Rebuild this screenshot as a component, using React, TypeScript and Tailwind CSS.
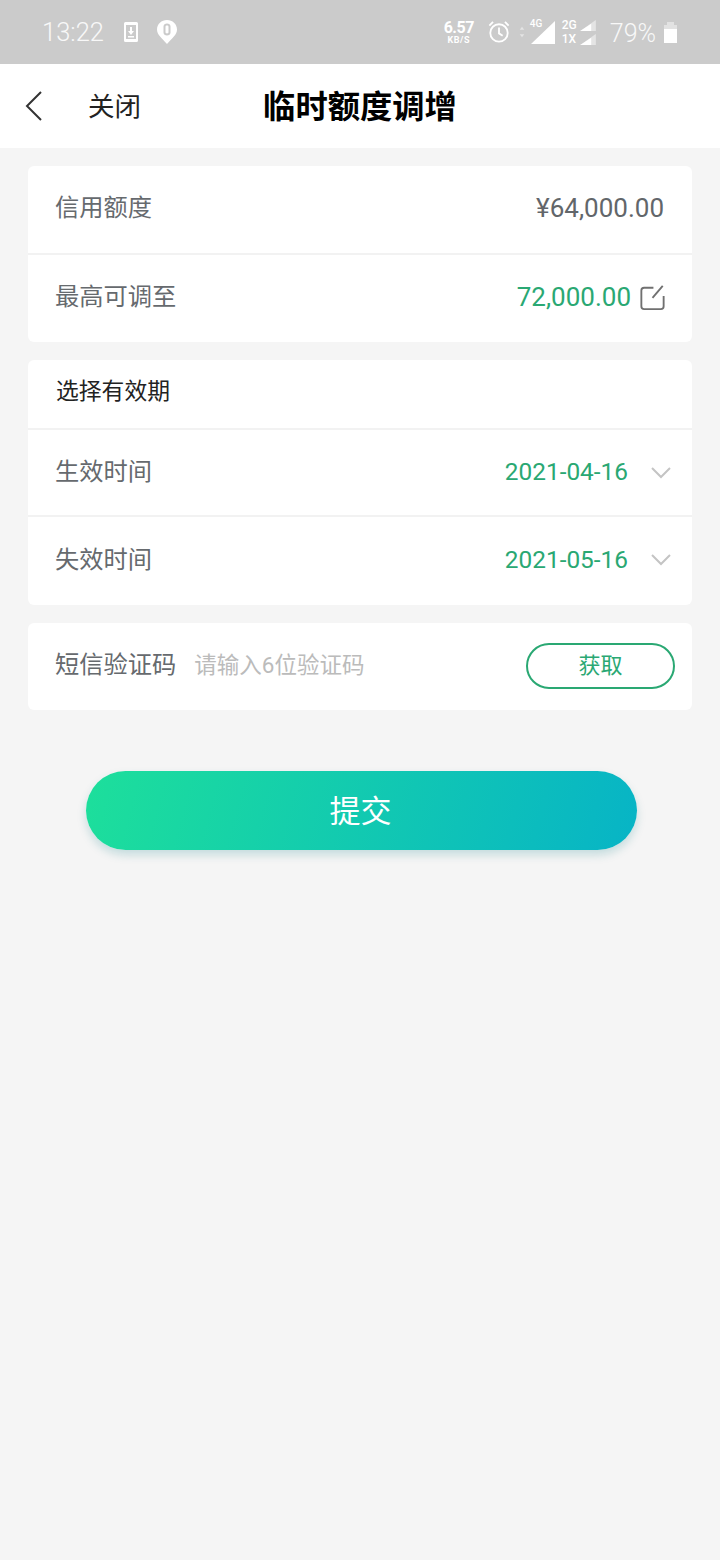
import React from "react";

const cjk = "font-['Roboto','Noto_Sans_CJK_SC',sans-serif]";

function StatusBar() {
  return (
    <div className="flex h-16 items-center justify-between bg-[#cbcbcb] pl-[42px] pr-[43px] text-white">
      <div className="flex items-center">
        <span className="pt-[2px] text-[25.500px] font-light leading-none text-[#f8f8f8]">13:22</span>
        <svg className="ml-[20px]" width="14" height="20" viewBox="0 0 14 20">
          <path fill="#fff" fillRule="evenodd" d="M1.500 0h11A1.500 1.500 0 0 1 14 1.500v17a1.500 1.500 0 0 1-1.500 1.500h-11A1.500 1.500 0 0 1 0 18.500v-17A1.500 1.500 0 0 1 1.500 0zM2 3v14h10V3z" />
          <path fill="#fff" d="M6 5h2v4h2l-3 4-3-4h2zM4 14h6v1.500H4z" />
        </svg>
        <svg className="ml-[19px]" width="20" height="24" viewBox="0 0 20 24">
          <path fill="#fff" fillRule="evenodd" d="M10 0c5.500 0 10 4 10 9.500 0 5.500-5 8.500-10 14.500C5 18 0 15 0 9.500 0 4 4.500 0 10 0zM10 3.500c-2 0-3.500 1.300-3.500 3v6c0 1.700 1.500 3 3.500 3s3.500-1.300 3.500-3v-6c0-1.700-1.500-3-3.500-3zm0 2c1 0 1.500.5 1.500 1.200v5.600c0 .7-.5 1.200-1.500 1.200s-1.500-.5-1.500-1.200V6.700C8.500 6 9 5.500 10 5.500z" />
        </svg>
      </div>
      <div className="flex items-center">
        <div className="flex w-[32px] flex-col items-center font-['Roboto',sans-serif] font-bold leading-none">
          <span className="text-[16px] leading-[15px] tracking-[-0.5px]">6.57</span>
          <span className="text-[9px] leading-[10px] tracking-[0.5px]">KB/S</span>
        </div>
        <svg className="ml-[13px]" width="22" height="24" viewBox="0 0 24 26" fill="none" stroke="#fff" strokeWidth="2">
          <circle cx="12" cy="14" r="9.500" />
          <path d="M12 8v6.500l4 2.500M1.500 6l4-4M22.500 6l-4-4" />
        </svg>
        <svg className="ml-[9px]" width="6" height="12" viewBox="0 0 8 14" fill="#e4e4e4">
          <path d="M4 0l3 4H1zM4 14l-3-4h6z" />
        </svg>
        <div className="relative ml-[6px] h-[24px] w-[24px]">
          <svg className="absolute inset-0" width="24" height="24" viewBox="0 0 24 24">
            <path fill="#fff" d="M24 1v23H0z" />
          </svg>
          <span className="absolute left-[-1px] top-[-2px] font-['Roboto',sans-serif] text-[10px] font-medium leading-[12px]">4G</span>
        </div>
        <div className="ml-[7px] flex flex-col gap-[1px]">
          <div className="flex h-[13px] items-center">
            <span className="w-[18px] font-['Roboto',sans-serif] text-[12px] font-medium leading-none">2G</span>
            <svg width="16" height="11" viewBox="0 0 17 12">
              <path fill="#e4e4e4" d="M17 0v12H0z" />
              <path fill="#fff" d="M12 4v8H0z" />
            </svg>
          </div>
          <div className="flex h-[13px] items-center">
            <span className="w-[18px] font-['Roboto',sans-serif] text-[12px] font-medium leading-none">1X</span>
            <svg width="16" height="11" viewBox="0 0 17 12">
              <path fill="#e4e4e4" d="M17 0v12H0z" />
              <path fill="#fff" d="M12 4v8H0z" />
            </svg>
          </div>
        </div>
        <span className="ml-[14px] pt-[2px] font-['Roboto',sans-serif] text-[25px] font-light leading-none text-[#f8f8f8]">79%</span>
        <div className="ml-[8px] flex flex-col items-center">
          <div className="h-[3px] w-[7px] bg-[#e2e2e2]" />
          <div className="h-[4px] w-[13px] bg-[#e2e2e2]" />
          <div className="h-[14px] w-[13px] bg-white" />
        </div>
      </div>
    </div>
  );
}

function NavBar() {
  return (
    <div className="relative flex h-[84px] items-center justify-center bg-white">
      <div className="absolute left-0 top-0 flex h-full items-center pl-[25px]">
        <svg width="18" height="30" viewBox="0 0 18 30" fill="none" stroke="#333" strokeWidth="2">
          <path d="M16 1L2 15l14 14" />
        </svg>
        <span className="ml-[45px] pt-[2px] text-[26.500px] leading-none text-[#222]">关闭</span>
      </div>
      <span className="pt-[2px] text-[32.300px] font-bold leading-none text-black">临时额度调增</span>
    </div>
  );
}

function Row({ label, className, children }: { label: string; className: string; children: React.ReactNode }) {
  return (
    <div className={`flex items-center justify-between pl-[27px] ${className}`}>
      <span className="text-[24.250px] leading-none text-[#666a6e]">{label}</span>
      {children}
    </div>
  );
}

function DateValue({ value }: { value: string }) {
  return (
    <div className="flex items-center pr-[21px]">
      <span className="text-[24.400px] leading-none text-[#2aa873]">{value}</span>
      <svg className="ml-[23px]" width="20" height="12" viewBox="0 0 20 12" fill="none" stroke="#c4c4c4" strokeWidth="2">
        <path d="M1 1l9 9 9-9" />
      </svg>
    </div>
  );
}

export default function App() {
  return (
    <div className={`flex min-h-[1560px] w-[720px] flex-col bg-[#f5f5f5] ${cjk}`}>
      <StatusBar />
      <NavBar />
      <div className="flex flex-col px-[28px] pt-[18px]">
        <div className="rounded-md bg-white">
          <Row label="信用额度" className="h-[89px] border-b-2 border-[#f2f2f2] pb-[3px]">
            <span className="pr-[28px] text-[26px] leading-none text-[#62666a]">¥64,000.00</span>
          </Row>
          <Row label="最高可调至" className="h-[87px] pb-[3px]">
            <div className="flex items-center pr-[27px]">
              <span className="text-[26px] leading-none text-[#2aa873]">72,000.00</span>
              <svg className="ml-[9px]" width="25" height="26" viewBox="0 0 26 28" fill="none" stroke="#707070" strokeWidth="2">
                <path d="M14 4H4a3 3 0 0 0-3 3v17a3 3 0 0 0 3 3h18a3 3 0 0 0 3-3V13" />
                <path d="M13 15L24 2" />
              </svg>
            </div>
          </Row>
        </div>
        <div className="mt-[18px] rounded-md bg-white">
          <div className="flex h-[70px] items-center border-b-2 border-[#f2f2f2] pb-[4px] pl-[28px]">
            <span className="text-[22.800px] leading-none text-[#222]">选择有效期</span>
          </div>
          <Row label="生效时间" className="h-[87px] border-b-2 border-[#f2f2f2]">
            <DateValue value="2021-04-16" />
          </Row>
          <Row label="失效时间" className="h-[88px] pb-[2px]">
            <DateValue value="2021-05-16" />
          </Row>
        </div>
        <div className="mt-[18px] flex h-[87px] items-center rounded-md bg-white pb-[2px] pl-[27px] pr-[17px]">
          <span className="text-[24.250px] leading-none text-[#666a6e]">短信验证码</span>
          <span className="ml-[18px] text-[22.500px] leading-none text-[#bbbbbb]">请输入6位验证码</span>
          <button className="ml-auto flex h-[46px] w-[149px] items-center justify-center rounded-full border-2 border-[#2aa873] text-[22px] leading-none text-[#2aa873]">
            获取
          </button>
        </div>
        <button className="ml-[58px] mt-[61px] flex h-[79px] w-[551px] items-center justify-center rounded-full bg-[linear-gradient(105deg,#1ddf9b,#07b4c6)] pr-[2px] pt-[2px] text-[31px] leading-none text-white shadow-[0_5px_10px_rgba(0,120,130,0.2)]">
          提交
        </button>
      </div>
    </div>
  );
}
